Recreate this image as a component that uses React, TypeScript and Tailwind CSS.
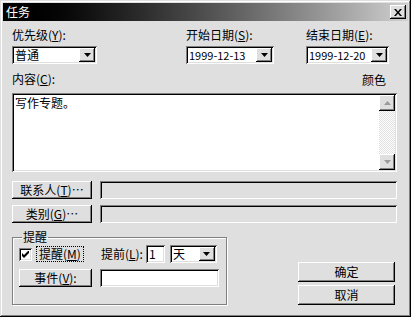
import React from "react";

const sunken =
  "shadow-[inset_1px_1px_0_#808080,inset_-1px_-1px_0_#ffffff,inset_2px_2px_0_#000000,inset_-2px_-2px_0_#dfdfdf]";
const raised =
  "bg-[#dfdfdf] shadow-[inset_-1px_-1px_0_#000000,inset_1px_1px_0_#ffffff,inset_-2px_-2px_0_#808080,inset_2px_2px_0_#dfdfdf]";

function Arrow({ up, gray }: { up?: boolean; gray?: boolean }) {
  return (
    <svg width="7" height="4" viewBox="0 0 7 4">
      <polygon
        points={up ? "3.5,0 7,4 0,4" : "0,0 7,0 3.5,4"}
        fill={gray ? "#9a9a9a" : "#000"}
      />
    </svg>
  );
}

function Key({ label, k, colon = true }: { label: string; k: string; colon?: boolean }) {
  return (
    <span className="whitespace-nowrap">
      {label}(<span className="underline">{k}</span>){colon ? ":" : ""}
    </span>
  );
}

function Combo({ value, w, small }: { value: string; w: string; small?: boolean }) {
  return (
    <div className={`${w} h-[18px] flex items-center bg-white p-[2px] ${sunken}`}>
      <span className={`flex-1 pl-[1px] whitespace-nowrap ${small ? "text-[11px]" : ""}`}>
        {value}
      </span>
      <div className={`w-[16px] h-full flex items-center justify-center ${raised}`}>
        <Arrow />
      </div>
    </div>
  );
}

function Button({ children, w, h = "h-[18px]" }: { children: React.ReactNode; w: string; h?: string }) {
  return (
    <div className={`${w} ${h} shrink-0 flex items-center justify-center whitespace-nowrap ${raised}`}>{children}</div>
  );
}

export default function App() {
  return (
    <div className="w-[411px] h-[317px] bg-[#dfdfdf] text-black text-[12px] leading-[14px] font-['Noto_Sans_CJK_SC',sans-serif] p-[3px] shadow-[inset_-1px_-1px_0_#000000,inset_1px_1px_0_#dfdfdf,inset_-2px_-2px_0_#808080,inset_2px_2px_0_#ffffff] overflow-hidden">
      {/* title bar */}
      <div className="h-[18px] flex items-center bg-linear-to-r from-[#000000] to-[#d0d0d0] pl-[3px] pr-[2px]">
        <span className="text-white text-[12px] flex-1">任务</span>
        <div className={`w-[16px] h-[14px] flex items-center justify-center ${raised}`}>
          <svg width="8" height="7" viewBox="0 0 8 7">
            <path d="M0 0h2l2 2.5L6 0h2L5 3.5 8 7H6L4 4.5 2 7H0l3-3.5z" fill="#000" />
          </svg>
        </div>
      </div>

      <div className="pl-[9px] pr-[11px]">
        {/* priority / dates */}
        <div className="flex mt-[7px]">
          <div className="w-[174px]">
            <div className="h-[14px]"><Key label="优先级" k="Y" /></div>
            <div className="mt-[4px]"><Combo value="普通" w="w-[85px]" /></div>
          </div>
          <div className="w-[120px]">
            <div className="h-[14px]"><Key label="开始日期" k="S" /></div>
            <div className="mt-[4px]"><Combo value="1999-12-13" w="w-[88px]" small /></div>
          </div>
          <div>
            <div className="h-[14px]"><Key label="结束日期" k="E" /></div>
            <div className="mt-[4px]"><Combo value="1999-12-20" w="w-[83px]" small /></div>
          </div>
        </div>

        {/* content */}
        <div className="flex mt-[8px] h-[14px]">
          <div className="flex-1"><Key label="内容" k="C" /></div>
          <div className="mr-[11px] mt-[1px]">颜色</div>
        </div>
        <div className={`mt-[7px] h-[79px] bg-white p-[2px] flex ${sunken}`}>
          <div className="flex-1 pl-[1px] pt-[1px]">写作专题。</div>
          <div className="w-[16px] flex flex-col bg-[repeating-conic-gradient(#ffffff_0%_25%,#dfdfdf_0%_50%)] [background-size:2px_2px]">
            <div className={`h-[16px] flex items-center justify-center ${raised}`}>
              <Arrow up gray />
            </div>
            <div className="flex-1" />
            <div className={`h-[16px] flex items-center justify-center ${raised}`}>
              <Arrow gray />
            </div>
          </div>
        </div>

        {/* contacts / category */}
        <div className="flex mt-[9px] gap-[8px]">
          <Button w="w-[80px]">
            <Key label="联系人" k="T" colon={false} />…
          </Button>
          <div className={`flex-1 h-[18px] bg-[#dfdfdf] ${sunken}`} />
        </div>
        <div className="flex mt-[6px] gap-[8px]">
          <Button w="w-[80px]">
            <Key label="类别" k="G" colon={false} />…
          </Button>
          <div className={`flex-1 h-[18px] bg-[#dfdfdf] ${sunken}`} />
        </div>

        {/* reminder + buttons */}
        <div className="flex mt-[7px]">
          <fieldset className="w-[215px] shrink-0 whitespace-nowrap border border-[#808080] shadow-[1px_1px_0_#ffffff,inset_1px_1px_0_#ffffff] pl-[6px] pr-[7px] pb-[14px]">
            <legend className="ml-[3px] px-[1px] leading-[14px]">提醒</legend>
            <div className="flex items-center mt-[1px] h-[18px]">
              <div className={`w-[13px] h-[13px] shrink-0 bg-white flex items-center justify-center ${sunken}`}>
                <svg width="7" height="7" viewBox="0 0 7 7">
                  <path d="M0 2v3l2 2L7 2V-1L2 4z" fill="#000" />
                </svg>
              </div>
              <div className="ml-[4px] shrink-0 border border-dotted border-black px-[2px] leading-[14px]">
                <Key label="提醒" k="M" colon={false} />
              </div>
              <div className="ml-[17px] shrink-0"><Key label="提前" k="L" /></div>
              <div className={`ml-[3px] shrink-0 w-[19px] h-[18px] bg-white pl-[3px] flex items-center ${sunken}`}>1</div>
              <div className="ml-[5px] shrink-0"><Combo value="天" w="w-[47px]" /></div>
            </div>
            <div className="flex mt-[6px] gap-[8px]">
              <Button w="w-[73px]">
                <Key label="事件" k="V" />
              </Button>
              <div className={`flex-1 h-[18px] bg-white ${sunken}`} />
            </div>
          </fieldset>
          <div className="ml-auto mr-[2px] pt-[32px] flex flex-col gap-[3px]">
            <Button w="w-[97px]" h="h-[20px]">确定</Button>
            <Button w="w-[97px]" h="h-[20px]">取消</Button>
          </div>
        </div>
      </div>
    </div>
  );
}
